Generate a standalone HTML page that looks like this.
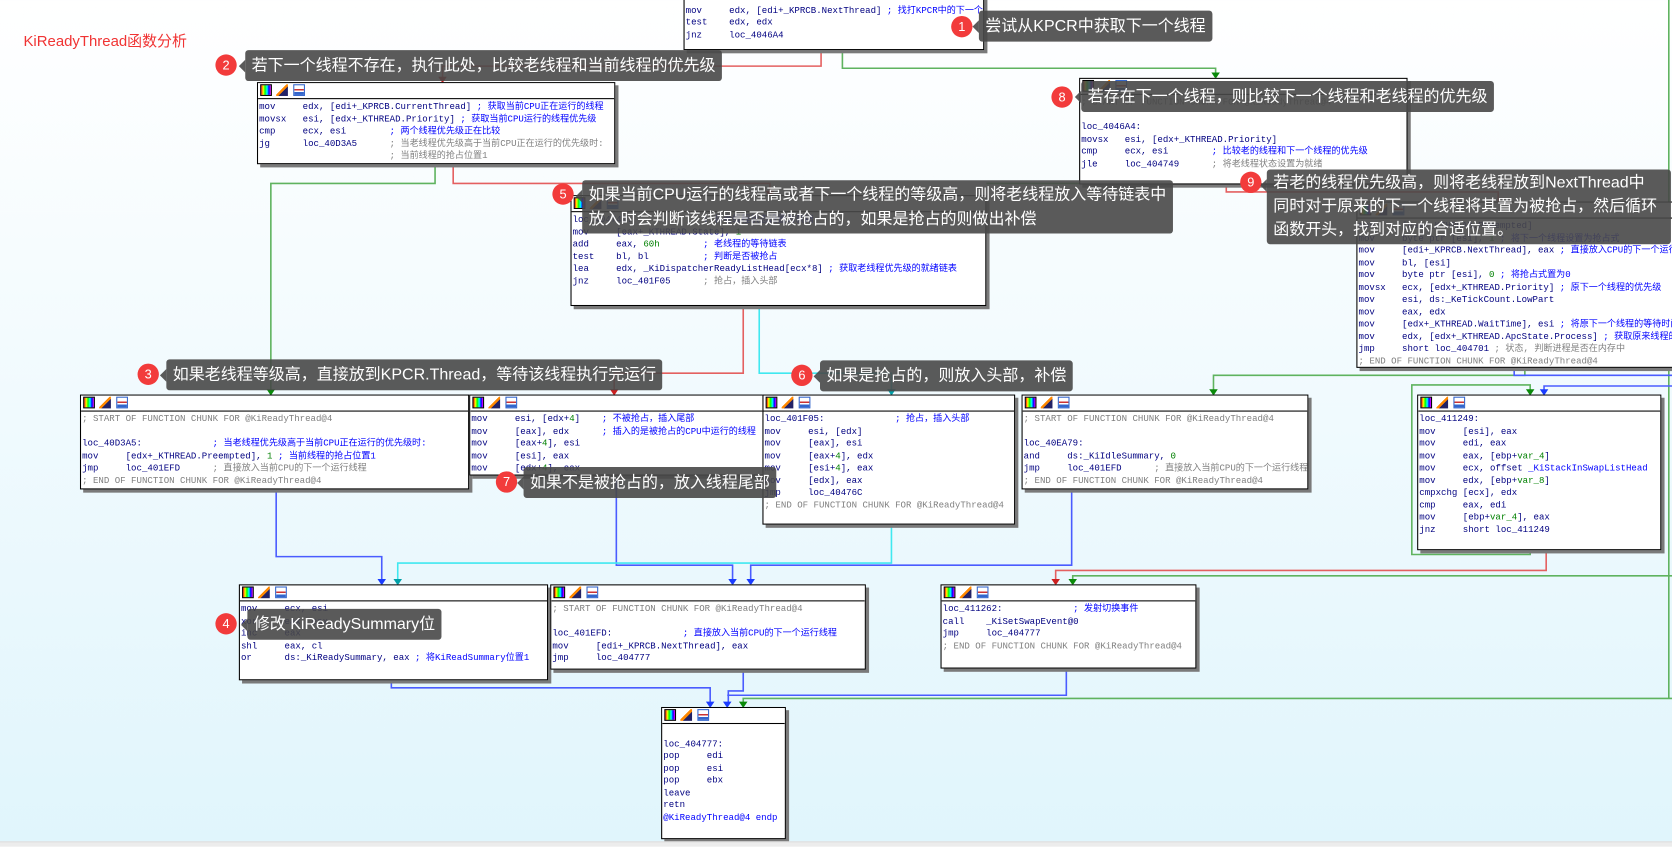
<!DOCTYPE html>
<html><head><meta charset="utf-8">
<style>
html,body{margin:0;padding:0;width:1672px;height:845px;overflow:hidden;}
body{background:linear-gradient(#ffffff 0%,#f3fbfe 40%,#e0f5fc 100%);}
#wrap{position:absolute;left:0;top:0;width:1568px;height:792px;transform:scale(1.06633);transform-origin:0 0;}
.box{position:absolute;background:#fff;border:1px solid #000;box-shadow:3px 3px 0 #7a7a7a;overflow:hidden;}
.hd{height:14px;border-bottom:1px solid #000;position:relative;background:#fff;}
.ic{position:absolute;top:1px;width:11px;height:11px;}
.i1{left:2px;background:linear-gradient(90deg,#f00,#ff0,#0f0,#0ff,#00f,#f0f);border:1px solid #000;width:9px;height:9px;}
.i2{left:17px;background:linear-gradient(135deg,#fff 0 45%,#f80 45% 60%,#226 60%);}
.i3{left:33px;border:1px solid #36c;width:9px;height:9px;background:linear-gradient(#fff 0 40%,#c33 40% 55%,#fff 55% 70%,#36c 70%);}
pre{margin:0;padding:2px 0 0 1px;font-family:"Liberation Mono","Noto Sans CJK SC",monospace;font-size:8.5px;line-height:11.5px;color:#000080;white-space:pre;}
.c{color:#0000ff}.g{color:#808080}.n{color:#008000}
.co{position:absolute;background:rgba(72,72,72,0.9);color:#fff;font-family:"Liberation Sans","Noto Sans CJK SC",sans-serif;font-size:15px;line-height:25px;padding:2px 6px;border-radius:3px;white-space:nowrap;}
.co:before{content:"";position:absolute;left:-6px;top:9px;border-right:6px solid rgba(72,72,72,0.9);border-top:6px solid transparent;border-bottom:6px solid transparent;}
.num{position:absolute;width:20px;height:20px;border-radius:50%;background:#f23b3b;color:#fff;font:12px "Liberation Sans",sans-serif;line-height:20px;text-align:center;}
svg{position:absolute;left:0;top:0;}
</style></head><body><div id="wrap">
<svg width="1568" height="792" fill="none" stroke-width="1.5">
<g stroke="#e46060">
<polyline points="770,45 770,62 415,62 415,74"/>
<polyline points="425,152 425,172 722,172 722,181"/>
<polyline points="1150,171 1150,180 1405,180 1405,194"/>
<polyline points="697,285 697,350 576,350 576,367"/>
<polyline points="1450,514 1450,535 990,535 990,545"/>
</g>
<g stroke="#5fb35f">
<polyline points="790,45 790,64 1140,64 1140,70"/>
<polyline points="408,152 408,172 254,172 254,367"/>
<polyline points="1140,161 1140,172 925,172"/>
<polyline points="1430,343 1430,352 1138,352 1138,367"/>
<polyline points="1568,357 1568,357"/>
<polyline points="1568,540 1006,540 1006,545"/>
<polyline points="1568,655 697,655 697,660"/>
<polyline points="1565,0 1565,655"/>
<polyline points="1435,514 1435,520 1324,520 1324,361 1435,361 1435,367"/>
</g>
<g stroke="#4a5cff">
<polyline points="1420,343 1420,352 1568,352"/>
<polyline points="1568,362 1448,362 1448,367"/>
<polyline points="259,457 259,522 358,522 358,545"/>
<polyline points="578,444 578,530 687,530 687,545"/>
<polyline points="1005,457 1005,530 704,530 704,545"/>
<polyline points="367,636 367,645 666,645 666,660"/>
<polyline points="697,626 697,648 683,648 683,660"/>
<polyline points="1000,625 1000,652 682,652"/>
</g>
<g stroke="#40e8f0">
<polyline points="712,285 712,350 836,350 836,367"/>
<polyline points="836,490 836,528 373,528 373,545"/>
</g>
<g fill="#1a3cff" stroke="none">
<path d="M354,543h8l-4,6z M683,543h8l-4,6z M700,543h8l-4,6z M662,658h8l-4,6z M678,658h8l-4,6z M1444,365h8l-4,6z"/>
</g>
<g fill="#0a8a0a" stroke="none">
<path d="M250,365h8l-4,6z M1136,68h8l-4,6z M1134,365h8l-4,6z M1431,365h8l-4,6z M1002,543h8l-4,6z M693,658h8l-4,6z"/>
</g>
<g fill="#cc2020" stroke="none">
<path d="M411,72h8l-4,6z M718,179h8l-4,6z M1401,192h8l-4,6z M572,365h8l-4,6z M986,543h8l-4,6z"/>
</g>
<g fill="#00a0a8" stroke="none"><path d="M832,365h8l-4,6z M369,543h8l-4,6z"/></g>
</svg>

<div style="position:absolute;left:22px;top:28px;color:#f03333;font:14px 'Liberation Sans','Noto Sans CJK SC',sans-serif;">KiReadyThread函数分析</div>

<div class="box" style="left:641px;top:-10px;width:280px;height:55px"><pre>

mov     edx, [edi+_KPRCB.NextThread] <span class="c">; 找打KPCR中的下一个线程</span>
test    edx, edx
jnz     loc_4046A4</pre></div>

<div class="box" style="left:241px;top:77px;width:334px;height:75px"><div class="hd"><i class="ic i1"></i><i class="ic i2"></i><i class="ic i3"></i></div><pre>mov     edx, [edi+_KPRCB.CurrentThread] <span class="c">; 获取当前CPU正在运行的线程</span>
movsx   esi, [edx+_KTHREAD.Priority] <span class="c">; 获取当前CPU运行的线程优先级</span>
cmp     ecx, esi        <span class="c">; 两个线程优先级正在比较</span>
jg      loc_40D3A5      <span class="g">; 当老线程优先级高于当前CPU正在运行的优先级时:</span>
                        <span class="g">; 当前线程的抢占位置1</span></pre></div>

<div class="box" style="left:1012px;top:73px;width:306px;height:98px"><div class="hd"><i class="ic i1"></i><i class="ic i2"></i><i class="ic i3"></i></div><pre><span class="g">; START OF FUNCTION CHUNK FOR @KiReadyThread@4</span>

loc_4046A4:
movsx   esi, [edx+_KTHREAD.Priority]
cmp     ecx, esi        <span class="c">; 比较老的线程和下一个线程的优先级</span>
jle     loc_404749      <span class="g">; 将老线程状态设置为就绪</span></pre></div>

<div class="box" style="left:535px;top:183px;width:388px;height:102px"><div class="hd"><i class="ic i1"></i><i class="ic i2"></i><i class="ic i3"></i></div><pre>
loc_404749:             <span class="c">; 将老线程状态设置为就绪</span>
mov     [eax+_KTHREAD.State], <span class="n">1</span>
add     eax, <span class="n">60h</span>        <span class="c">; 老线程的等待链表</span>
test    bl, bl          <span class="c">; 判断是否被抢占</span>
lea     edx, _KiDispatcherReadyListHead[ecx*8] <span class="c">; 获取老线程优先级的就绪链表</span>
jnz     loc_401F05      <span class="g">; 抢占，插入头部</span></pre></div>

<div class="box" style="left:1272px;top:189px;width:310px;height:154px"><div class="hd"><i class="ic i1"></i><i class="ic i2"></i><i class="ic i3"></i></div><pre>mov     [eax+_KTHREAD.Preempted]
mov     byte ptr [esi], <span class="n">1</span> <span class="c">; 将下一个线程设置为抢占式</span>
mov     [edi+_KPRCB.NextThread], eax <span class="c">; 直接放入CPU的下一个运行线程</span>
mov     bl, [esi]
mov     byte ptr [esi], <span class="n">0</span> <span class="c">; 将抢占式置为0</span>
movsx   ecx, [edx+_KTHREAD.Priority] <span class="c">; 原下一个线程的优先级</span>
mov     esi, ds:_KeTickCount.LowPart
mov     eax, edx
mov     [edx+_KTHREAD.WaitTime], esi <span class="c">; 将原下一个线程的等待时间</span>
mov     edx, [edx+_KTHREAD.ApcState.Process] <span class="c">; 获取原来线程的进程</span>
jmp     short loc_404701 <span class="g">; 状态, 判断进程是否在内存中</span>
<span class="g">; END OF FUNCTION CHUNK FOR @KiReadyThread@4</span></pre></div>

<div class="box" style="left:75px;top:370px;width:363px;height:87px"><div class="hd"><i class="ic i1"></i><i class="ic i2"></i><i class="ic i3"></i></div><pre><span class="g">; START OF FUNCTION CHUNK FOR @KiReadyThread@4</span>

loc_40D3A5:             <span class="c">; 当老线程优先级高于当前CPU正在运行的优先级时:</span>
mov     [edx+_KTHREAD.Preempted], <span class="n">1</span> <span class="c">; 当前线程的抢占位置1</span>
jmp     loc_401EFD      <span class="g">; 直接放入当前CPU的下一个运行线程</span>
<span class="g">; END OF FUNCTION CHUNK FOR @KiReadyThread@4</span></pre></div>

<div class="box" style="left:440px;top:370px;width:276px;height:74px"><div class="hd"><i class="ic i1"></i><i class="ic i2"></i><i class="ic i3"></i></div><pre>mov     esi, [edx+<span class="n">4</span>]    <span class="c">; 不被抢占，插入尾部</span>
mov     [eax], edx      <span class="c">; 插入的是被抢占的CPU中运行的线程</span>
mov     [eax+<span class="n">4</span>], esi
mov     [esi], eax
mov     [edx+<span class="n">4</span>], eax</pre></div>

<div class="box" style="left:715px;top:370px;width:235px;height:120px"><div class="hd"><i class="ic i1"></i><i class="ic i2"></i><i class="ic i3"></i></div><pre>
loc_401F05:             <span class="c">; 抢占，插入头部</span>
mov     esi, [edx]
mov     [eax], esi
mov     [eax+<span class="n">4</span>], edx
mov     [esi+<span class="n">4</span>], eax
mov     [edx], eax
jmp     loc_40476C
<span class="g">; END OF FUNCTION CHUNK FOR @KiReadyThread@4</span></pre></div>

<div class="box" style="left:958px;top:370px;width:267px;height:87px"><div class="hd"><i class="ic i1"></i><i class="ic i2"></i><i class="ic i3"></i></div><pre><span class="g">; START OF FUNCTION CHUNK FOR @KiReadyThread@4</span>

loc_40EA79:
and     ds:_KiIdleSummary, <span class="n">0</span>
jmp     loc_401EFD      <span class="g">; 直接放入当前CPU的下一个运行线程</span>
<span class="g">; END OF FUNCTION CHUNK FOR @KiReadyThread@4</span></pre></div>

<div class="box" style="left:1329px;top:370px;width:227px;height:144px"><div class="hd"><i class="ic i1"></i><i class="ic i2"></i><i class="ic i3"></i></div><pre>
loc_411249:
mov     [esi], eax
mov     edi, eax
mov     eax, [ebp+<span class="n">var_4</span>]
mov     ecx, offset <span class="c">_KiStackInSwapListHead</span>
mov     edx, [ebp+<span class="n">var_8</span>]
cmpxchg [ecx], edx
cmp     eax, edi
mov     [ebp+<span class="n">var_4</span>], eax
jnz     short loc_411249</pre></div>

<div class="box" style="left:224px;top:548px;width:288px;height:88px"><div class="hd"><i class="ic i1"></i><i class="ic i2"></i><i class="ic i3"></i></div><pre>
mov     ecx, esi
xor     eax, eax
inc     eax
shl     eax, cl
or      ds:_KiReadySummary, eax <span class="c">; 将KiReadSummary位置1</span></pre></div>

<div class="box" style="left:516px;top:548px;width:294px;height:78px"><div class="hd"><i class="ic i1"></i><i class="ic i2"></i><i class="ic i3"></i></div><pre><span class="g">; START OF FUNCTION CHUNK FOR @KiReadyThread@4</span>

loc_401EFD:             <span class="c">; 直接放入当前CPU的下一个运行线程</span>
mov     [edi+_KPRCB.NextThread], eax
jmp     loc_404777</pre></div>

<div class="box" style="left:882px;top:548px;width:238px;height:77px"><div class="hd"><i class="ic i1"></i><i class="ic i2"></i><i class="ic i3"></i></div><pre>
loc_411262:             <span class="c">; 发射切换事件</span>
call    _KiSetSwapEvent@0
jmp     loc_404777
<span class="g">; END OF FUNCTION CHUNK FOR @KiReadyThread@4</span></pre></div>

<div class="box" style="left:620px;top:663px;width:115px;height:122px"><div class="hd"><i class="ic i1"></i><i class="ic i2"></i><i class="ic i3"></i></div><pre>

loc_404777:
pop     edi
pop     esi
pop     ebx
leave
retn
<span class="c">@KiReadyThread@4 endp</span></pre></div>

<div style="position:absolute;left:0;top:789px;width:1568px;height:4px;background:#ececec;border-top:1px solid #ddd"></div>

<div class="num" style="left:892px;top:15px">1</div><div class="co" style="left:918px;top:10px">尝试从KPCR中获取下一个线程</div>
<div class="num" style="left:202px;top:51px">2</div><div class="co" style="left:230px;top:47px">若下一个线程不存在，执行此处，比较老线程和当前线程的优先级</div>
<div class="num" style="left:986px;top:81px">8</div><div class="co" style="left:1014px;top:76px">若存在下一个线程，则比较下一个线程和老线程的优先级</div>
<div class="num" style="left:518px;top:172px">5</div><div class="co" style="left:546px;top:169px;line-height:23px">如果当前CPU运行的线程高或者下一个线程的等级高，则将老线程放入等待链表中<br>放入时会判断该线程是否是被抢占的，如果是抢占的则做出补偿</div>
<div class="num" style="left:1163px;top:161px">9</div><div class="co" style="left:1188px;top:159px;line-height:22px;width:367px">若老的线程优先级高，则将老线程放到NextThread中<br>同时对于原来的下一个线程将其置为被抢占，然后循环<br>函数开头，找到对应的合适位置。</div>
<div class="num" style="left:129px;top:341px">3</div><div class="co" style="left:156px;top:337px">如果老线程等级高，直接放到KPCR.Thread，等待该线程执行完运行</div>
<div class="num" style="left:742px;top:342px">6</div><div class="co" style="left:769px;top:338px">如果是抢占的，则放入头部，补偿</div>
<div class="num" style="left:465px;top:442px">7</div><div class="co" style="left:491px;top:438px">如果不是被抢占的，放入线程尾部</div>
<div class="num" style="left:202px;top:575px">4</div><div class="co" style="left:232px;top:571px">修改 KiReadySummary位</div>
</div></body></html>
